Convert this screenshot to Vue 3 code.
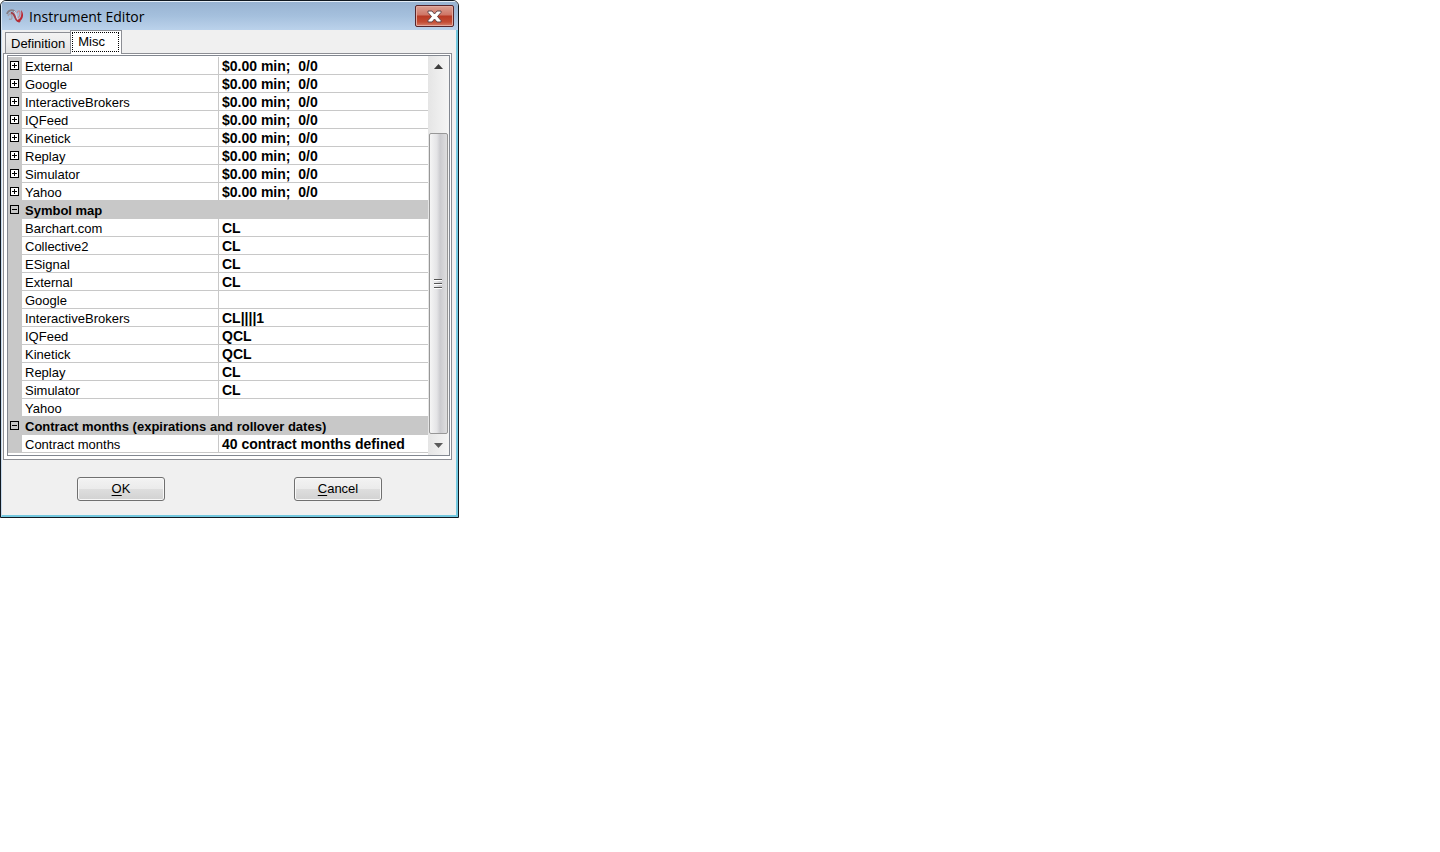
<script setup>
import { ref } from 'vue'

const tabs = ['Definition', 'Misc']
const active = ref('Misc')
const names = ['External', 'Google', 'InteractiveBrokers', 'IQFeed', 'Kinetick', 'Replay', 'Simulator', 'Yahoo']
const symbols = [
  ['Barchart.com', 'CL'],
  ['Collective2', 'CL'],
  ['ESignal', 'CL'],
  ['External', 'CL'],
  ['Google', ''],
  ['InteractiveBrokers', 'CL||||1'],
  ['IQFeed', 'QCL'],
  ['Kinetick', 'QCL'],
  ['Replay', 'CL'],
  ['Simulator', 'CL'],
  ['Yahoo', '']
]
const rows = [
  ...names.map((name) => ({ name, value: '$0.00 min;  0/0', toggle: 'plus' })),
  { name: 'Symbol map', group: true, toggle: 'minus' },
  ...symbols.map(([name, value]) => ({ name, value })),
  { name: 'Contract months (expirations and rollover dates)', group: true, toggle: 'minus' },
  { name: 'Contract months', value: '40 contract months defined' }
]
</script>

<template>
  <main class="window">
    <header class="titlebar">
      <svg class="logo" width="18" height="16" viewBox="0 0 18 16" fill="none" aria-hidden="true">
        <path d="M1 6C2 2 7 1 9 4" stroke="#857d84" stroke-width="1.8" />
        <path d="M2 8C4 4 6 6 6 9C6 11 5 12 3 11" stroke="#a8a0a9" stroke-width="1.4" />
        <path d="M5 5C8 4 8 8 10 11C11 13 13 14 14 13" stroke="#a33e46" stroke-width="2" />
        <path d="M8 3C11 5 10 10 12 12" stroke="#e8d8de" stroke-width="1" />
        <path d="M15 2C18 5 18 11 13 14C12 14 11 13 11 12C15 11 16 7 15 2Z" fill="#bb2833" />
        <path d="M11 5C12 2 14 2 14 6C14 8 13 9 12 10" stroke="#c9878f" stroke-width="1.3" />
      </svg>
      <h1 class="title">Instrument Editor</h1>
      <button class="close" type="button" aria-label="Close">
        <svg width="15" height="13" viewBox="0 0 15 13" aria-hidden="true">
          <path d="M1 1H5L7.5 4L10 1H14V2.500L10.500 6.500L14 10.500V12H10L7.500 9L5 12H1V10.500L4.500 6.500L1 2.500Z" fill="#fff" stroke="#61454a" stroke-width="1" />
        </svg>
      </button>
    </header>

    <div class="content">
      <div class="tabs" role="tablist">
        <button
          v-for="tab in tabs"
          :key="tab"
          type="button"
          role="tab"
          class="tab"
          :class="{ selected: active === tab }"
          :aria-selected="active === tab"
          @click="active = tab"
        ><span class="tab-label">{{ tab }}</span></button>
      </div>

      <div class="panel">
        <div class="grid">
          <div class="list">
            <table class="properties">
              <colgroup>
                <col class="col-gutter" />
                <col class="col-name" />
                <col />
              </colgroup>
              <tbody>
                <tr v-for="(row, i) in rows" :key="i" :class="{ group: row.group }">
                  <td class="gutter">
                    <button v-if="row.toggle" class="toggle" type="button" :aria-label="'Toggle ' + row.name">
                      <svg width="9" height="9" viewBox="0 0 9 9" shape-rendering="crispEdges" aria-hidden="true">
                        <rect x="0" y="0" width="9" height="9" fill="#000" />
                        <rect x="1" y="1" width="7" height="7" :fill="row.group ? '#c8c8c8' : '#fff'" />
                        <rect x="2" y="4" width="5" height="1" fill="#000" />
                        <rect v-if="row.toggle === 'plus'" x="4" y="2" width="1" height="5" fill="#000" />
                      </svg>
                    </button>
                  </td>
                  <th scope="row" class="name" :colspan="row.group ? 2 : 1">{{ row.name }}</th>
                  <td v-if="!row.group" class="value">{{ row.value }}</td>
                </tr>
              </tbody>
            </table>
          </div>
          <div class="scrollbar">
            <button class="arrow" type="button" aria-label="Scroll up">
              <svg width="9" height="5" viewBox="0 0 9 5" aria-hidden="true"><path d="M0 5L4.5 0L9 5Z" fill="#3d3d3d" /></svg>
            </button>
            <div class="track">
              <div class="thumb">
                <span class="grip"></span>
                <span class="grip"></span>
                <span class="grip"></span>
              </div>
            </div>
            <button class="arrow" type="button" aria-label="Scroll down">
              <svg width="9" height="5" viewBox="0 0 9 5" aria-hidden="true"><path d="M0 0L4.5 5L9 0Z" fill="#5a5a5a" /></svg>
            </button>
          </div>
        </div>
      </div>

      <footer class="actions">
        <button class="action" type="button"><u>O</u>K</button>
        <button class="action" type="button"><u>C</u>ancel</button>
      </footer>
    </div>
  </main>
</template>

<style>
body {
  background: #fff;
}
</style>

<style scoped>
* {
  box-sizing: border-box;
}
button {
  margin: 0;
  padding: 0;
  font: inherit;
  color: inherit;
}
.window {
  width: 100%;
  max-width: 459px;
  overflow: hidden;
  background: #f0f0f0;
  border: 1px solid #101820;
  border-radius: 6px 6px 0 0;
  font: 13px/16px "Liberation Sans", Arial, sans-serif;
  color: #000;
}
.titlebar {
  display: flex;
  align-items: center;
  height: 29px;
  padding: 0 4px;
  border-top: 1px solid #e4eef8;
  border-left: 1px solid #dce9f6;
  background: linear-gradient(#98b3d2, #a5c0dd 50%, #bbd2eb);
}
.logo {
  margin-right: 5px;
}
.title {
  flex: 1;
  margin: 0;
  padding-top: 2px;
  font: 400 14px/18px "Open Sans", "Noto Sans", sans-serif;
}
.close {
  display: flex;
  align-items: center;
  justify-content: center;
  width: 39px;
  height: 22px;
  border: 1px solid #56252b;
  border-radius: 2px;
  background: linear-gradient(#dba093, #cf7565 45%, #b83a25 50%, #c34c33 80%, #d7826d);
  box-shadow: inset 0 0 0 1px #e3aaa0;
}
.content {
  border: solid #73c8df;
  border-width: 0 2px 2px 1px;
  border-left-color: #c5d9ed;
}
.tabs {
  display: flex;
  align-items: flex-end;
  height: 23px;
  padding-left: 3px;
}
.tab {
  height: 21px;
  padding: 1px 5px 0;
  border: 1px solid #8c8e94;
  border-bottom: 0;
  border-right: 0;
  background: linear-gradient(#f3f3f3, #ececec 50%, #dfdfdf);
}
.tab.selected {
  position: relative;
  height: 24px;
  margin-bottom: -1px;
  padding: 0 2px 1px 1px;
  border-right: 1px solid #8c8e94;
  background: #fff;
}
.tab-label {
  display: block;
}
.selected .tab-label {
  height: 20px;
  padding: 1px 13px 0 5px;
  border: 1px dotted #000;
}
.panel {
  margin: 0 4px 0 1px;
  padding: 1px 1px 3px 3px;
  border: 1px solid #8c8e94;
  background: #fff;
}
.grid {
  display: flex;
  border: 1px solid #828790;
  background: #fff;
}
.list {
  flex: 1;
  padding: 1px 0 2px;
}
.properties {
  width: 100%;
  table-layout: fixed;
  border-collapse: separate;
  border-spacing: 0;
}
.col-gutter {
  width: 14px;
}
.col-name {
  width: 197px;
}
.properties td,
.properties th {
  height: 18px;
  padding: 0;
  line-height: 15px;
  text-align: left;
  white-space: pre;
}
.properties .gutter {
  padding-bottom: 2px;
  background: #c8c8c8;
}
.toggle {
  display: flex;
  margin-left: 2px;
  border: 0;
  background: none;
}
.properties .name {
  padding: 2px 0 0 3px;
  border-right: 1px solid #c8c8c8;
  border-bottom: 1px solid #c8c8c8;
  font-weight: 400;
}
.properties .value {
  padding: 2px 0 0 3px;
  border-bottom: 1px solid #c8c8c8;
  font-size: 14px;
  font-weight: 700;
}
.properties .group .name {
  background: #c8c8c8;
  font-weight: 700;
}
.scrollbar {
  display: flex;
  flex-direction: column;
  width: 21px;
  padding: 0 1px;
  background: linear-gradient(90deg, #e5e5e5, #f5f5f5);
}
.arrow {
  display: flex;
  align-items: center;
  justify-content: center;
  height: 20px;
  padding-right: 1px;
  border: 0;
  background: none;
}
.track {
  flex: 1;
  display: flex;
  flex-direction: column;
  justify-content: flex-end;
  padding-bottom: 1px;
}
.thumb {
  display: flex;
  flex-direction: column;
  align-items: center;
  justify-content: center;
  gap: 2px;
  height: 84%;
  padding-right: 1px;
  border: 1px solid #979797;
  border-radius: 2px;
  background: linear-gradient(90deg, #f5f5f5, #e4e4e6 40%, #cbcbcf 60%, #dededf);
}
.grip {
  width: 8px;
  height: 2px;
  border-top: 1px solid #555;
  border-bottom: 1px solid #fff;
}
.actions {
  display: flex;
  justify-content: space-between;
  padding: 17px 74px 14px 75px;
}
.action {
  width: 88px;
  height: 24px;
  border: 1px solid #707070;
  border-radius: 3px;
  background: linear-gradient(#f3f3f3, #ebebeb 50%, #dedede 50%, #d2d2d2);
  box-shadow: inset 0 0 0 1px #f8f8f8;
}
.action u {
  text-underline-offset: 2px;
}
</style>
